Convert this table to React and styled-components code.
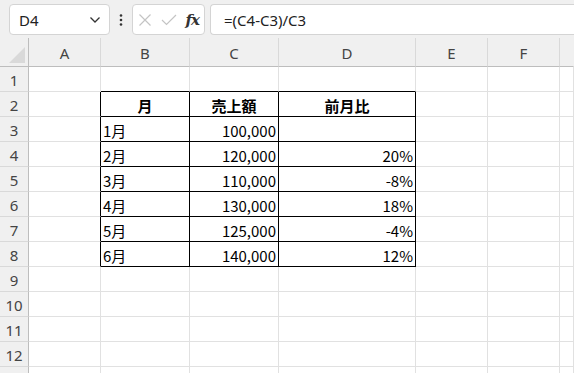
import React from "react";
import styled, { createGlobalStyle } from "styled-components";

const Global = createGlobalStyle`
  html, body { margin: 0; padding: 0; background: #fff; overflow: hidden; }
  body { font-family: "Noto Sans CJK JP", "Noto Sans", sans-serif; }
`;

const Toolbar = styled.div`
  height: 38px;
  box-sizing: border-box;
  background: #f0f0f0;
  display: flex;
  align-items: flex-start;
  padding: 4px 0 0 9px;
`;

const Box = styled.div`
  height: 31px;
  box-sizing: border-box;
  background: #fff;
  border: 1px solid #d4d4d4;
  border-radius: 4px;
  display: flex;
  align-items: center;
`;

const NameBox = styled(Box)`
  width: 101px;
  padding: 0 8px 0 9px;
  justify-content: space-between;
  font-family: "Noto Sans", sans-serif;
  font-size: 15px;
  color: #222;
`;

const Dots = styled.div`
  width: 22px;
  display: flex;
  justify-content: center;
  padding-top: 10px;
`;

const FxBox = styled(Box)`
  width: 73px;
  padding: 0 5px;
  justify-content: space-between;
`;

const Fx = styled.span`
  font-family: "DejaVu Serif", "Liberation Serif", serif;
  font-style: italic;
  font-weight: bold;
  font-size: 15px;
  color: #333;
  letter-spacing: -1px;
`;

const FormulaBox = styled(Box)`
  flex: 1;
  margin-left: 5px;
  border-right: none;
  border-radius: 4px 0 0 4px;
  padding-left: 13px;
  font-family: "Noto Sans", sans-serif;
  font-size: 15px;
  color: #222;
`;

const Grid = styled.div`
  display: grid;
  grid-template-columns: 29px 72px 89px 89px 137px 72px 72px 1fr;
  grid-auto-rows: 25px;
  grid-template-rows: 29px;
`;

const Corner = styled.div`
  background: #f0f0f0;
  border-right: 1px solid #bdbdbd;
  border-bottom: 1px solid #bdbdbd;
  position: relative;
`;

const Triangle = styled.div`
  position: absolute;
  right: 3px;
  bottom: 3px;
  width: 0;
  height: 0;
  border-left: 16px solid transparent;
  border-bottom: 16px solid #d9d9d9;
`;

const ColHead = styled.div`
  background: #f0f0f0;
  border-bottom: 1px solid #bdbdbd;
  border-right: 1px solid ${(p) => (p.$last ? "transparent" : "#d9d9d9")};
  display: flex;
  align-items: center;
  justify-content: center;
  font-family: "Noto Sans", sans-serif;
  font-size: 15px;
  color: #444;
  padding-top: 1px;
`;

const RowHead = styled.div`
  background: #f0f0f0;
  border-right: 1px solid #bdbdbd;
  border-bottom: 1px solid #d9d9d9;
  display: flex;
  align-items: center;
  justify-content: center;
  font-family: "Noto Sans", sans-serif;
  font-size: 15px;
  color: #444;
  padding-top: 2px;
`;

const Cell = styled.div`
  border-right: 1px solid ${(p) => (p.$br ? "#000" : "#e1e1e1")};
  border-bottom: 1px solid ${(p) => (p.$bb ? "#000" : "#e1e1e1")};
  display: flex;
  align-items: center;
  justify-content: ${(p) =>
    p.$align === "right" ? "flex-end" : p.$align === "center" ? "center" : "flex-start"};
  padding: 2px 2px 0 2px;
  font-size: 15px;
  font-weight: ${(p) => (p.$bold ? 700 : 400)};
  color: #000;
  white-space: nowrap;
  overflow: hidden;
`;

const cols = ["A", "B", "C", "D", "E", "F", "G"];

const data = {
  2: ["月", "売上額", "前月比"],
  3: ["1月", "100,000", ""],
  4: ["2月", "120,000", "20%"],
  5: ["3月", "110,000", "-8%"],
  6: ["4月", "130,000", "18%"],
  7: ["5月", "125,000", "-4%"],
  8: ["6月", "140,000", "12%"],
};

function Chevron() {
  return (
    <svg width="12" height="8" viewBox="0 0 12 8">
      <path d="M1.5 1.5 L6 6 L10.5 1.5" fill="none" stroke="#333" strokeWidth="1.3" />
    </svg>
  );
}

function VDots() {
  return (
    <svg width="4" height="12" viewBox="0 0 4 12">
      <circle cx="2" cy="1.5" r="1.3" fill="#333" />
      <circle cx="2" cy="6" r="1.3" fill="#333" />
      <circle cx="2" cy="10.5" r="1.3" fill="#333" />
    </svg>
  );
}

function Cross() {
  return (
    <svg width="14" height="14" viewBox="0 0 14 14">
      <path d="M1.5 1.5 L12.5 12.5 M12.5 1.5 L1.5 12.5" stroke="#c4c4c4" strokeWidth="1.2" fill="none" />
    </svg>
  );
}

function Check() {
  return (
    <svg width="16" height="14" viewBox="0 0 16 14">
      <path d="M1 7 L5.5 11.5 L15 2" stroke="#c4c4c4" strokeWidth="1.2" fill="none" />
    </svg>
  );
}

export default function App() {
  const rows = [];
  for (let r = 1; r <= 13; r++) {
    rows.push(<RowHead key={"h" + r}>{r <= 12 ? r : ""}</RowHead>);
    cols.forEach((c, ci) => {
      const inTable = r >= 2 && r <= 8 && ci >= 1 && ci <= 3;
      const leftOfTable = r >= 2 && r <= 8 && ci === 0;
      const aboveTable = r === 1 && ci >= 1 && ci <= 3;
      const br = inTable || leftOfTable;
      const bb = inTable || aboveTable;
      let text = "";
      let align = "left";
      let bold = false;
      if (inTable) {
        text = data[r][ci - 1];
        if (r === 2) {
          align = "center";
          bold = true;
        } else if (ci > 1) {
          align = "right";
        }
      }
      rows.push(
        <Cell key={c + r} $br={br} $bb={bb} $align={align} $bold={bold}>
          {text}
        </Cell>
      );
    });
  }
  return (
    <>
      <Global />
      <Toolbar>
        <NameBox>
          <span>D4</span>
          <Chevron />
        </NameBox>
        <Dots>
          <VDots />
        </Dots>
        <FxBox>
          <Cross />
          <Check />
          <Fx>fx</Fx>
        </FxBox>
        <FormulaBox>=(C4-C3)/C3</FormulaBox>
      </Toolbar>
      <Grid>
        <Corner>
          <Triangle />
        </Corner>
        {cols.map((c, i) => (
          <ColHead key={c} $last={i === cols.length - 1}>
            {c === "G" ? "" : c}
          </ColHead>
        ))}
        {rows}
      </Grid>
    </>
  );
}
